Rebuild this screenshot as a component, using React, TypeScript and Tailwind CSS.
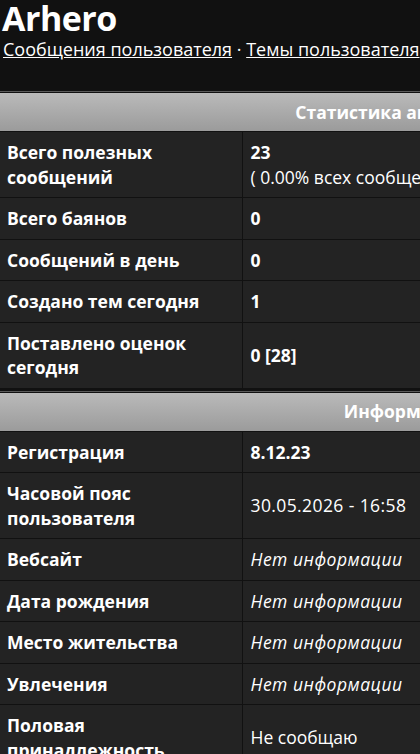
const stats: { label: string; value: React.ReactNode }[] = [
  {
    label: "Всего полезных сообщений",
    value: (
      <>
        <b>23</b>
        <br />( 0.00% всех сообщений / 0.00 сообщений в день )
      </>
    ),
  },
  { label: "Всего баянов", value: <b>0</b> },
  { label: "Сообщений в день", value: <b>0</b> },
  { label: "Создано тем сегодня", value: <b>1</b> },
  { label: "Поставлено оценок сегодня", value: <b>0 [28]</b> },
];

const info: { label: string; value: React.ReactNode }[] = [
  { label: "Регистрация", value: <b>8.12.23</b> },
  {
    label: "Часовой пояс пользователя",
    value: <span className="tracking-[0.4px]">30.05.2026 - 16:58</span>,
  },
  { label: "Вебсайт", value: <i className="tracking-[0.5px]">Нет информации</i> },
  { label: "Дата рождения", value: <i className="tracking-[0.5px]">Нет информации</i> },
  { label: "Место жительства", value: <i className="tracking-[0.5px]">Нет информации</i> },
  { label: "Увлечения", value: <i className="tracking-[0.5px]">Нет информации</i> },
  { label: "Половая принадлежность", value: "Не сообщаю" },
];

const InfoTable = ({
  title,
  rows,
}: {
  title: string;
  rows: { label: string; value: React.ReactNode }[];
}) => {
  return (
    <div className="w-[810px] border-t border-[#5a5a5a]">
      <div className="border-t border-[#111] h-[39px] bg-gradient-to-b from-[#bababa] to-[#9b9b9b] flex items-center justify-center font-bold text-white">
        {title}
      </div>
      <table className="w-full table-fixed border-collapse">
        <colgroup>
          <col className="w-[242px]" />
          <col />
        </colgroup>
        <tbody>
          {rows.map((r) => (
            <tr key={r.label} className="bg-[#232323]">
              <td className="border border-[#111] border-l-0 px-[7px] py-2 font-bold align-middle">
                {r.label}
              </td>
              <td className="border border-[#111] px-2 py-2 align-middle whitespace-nowrap">
                {r.value}
              </td>
            </tr>
          ))}
        </tbody>
      </table>
    </div>
  );
};

const App = () => {
  return (
    <div
      className="bg-[#111] text-white min-h-screen w-[420px] overflow-hidden text-[17.5px] leading-[24.5px]"
      style={{ fontFamily: '"Open Sans", "Noto Sans", sans-serif' }}
    >
      <h1 className="text-[34px] font-bold leading-none px-[2px] pt-[1px] tracking-[-0.5px]">
        Arhero
      </h1>
      <div className="px-[3px] mt-[2px] whitespace-nowrap h-[54px] text-[18px]">
        <a href="#" className="underline">
          Сообщения пользователя
        </a>{" "}
        ·{" "}
        <a href="#" className="underline">
          Темы пользователя
        </a>
      </div>
      <InfoTable title="Статистика активности" rows={stats} />
      <div className="h-[2px]" />
      <InfoTable title="Информация" rows={info} />
    </div>
  );
};

export default App;
